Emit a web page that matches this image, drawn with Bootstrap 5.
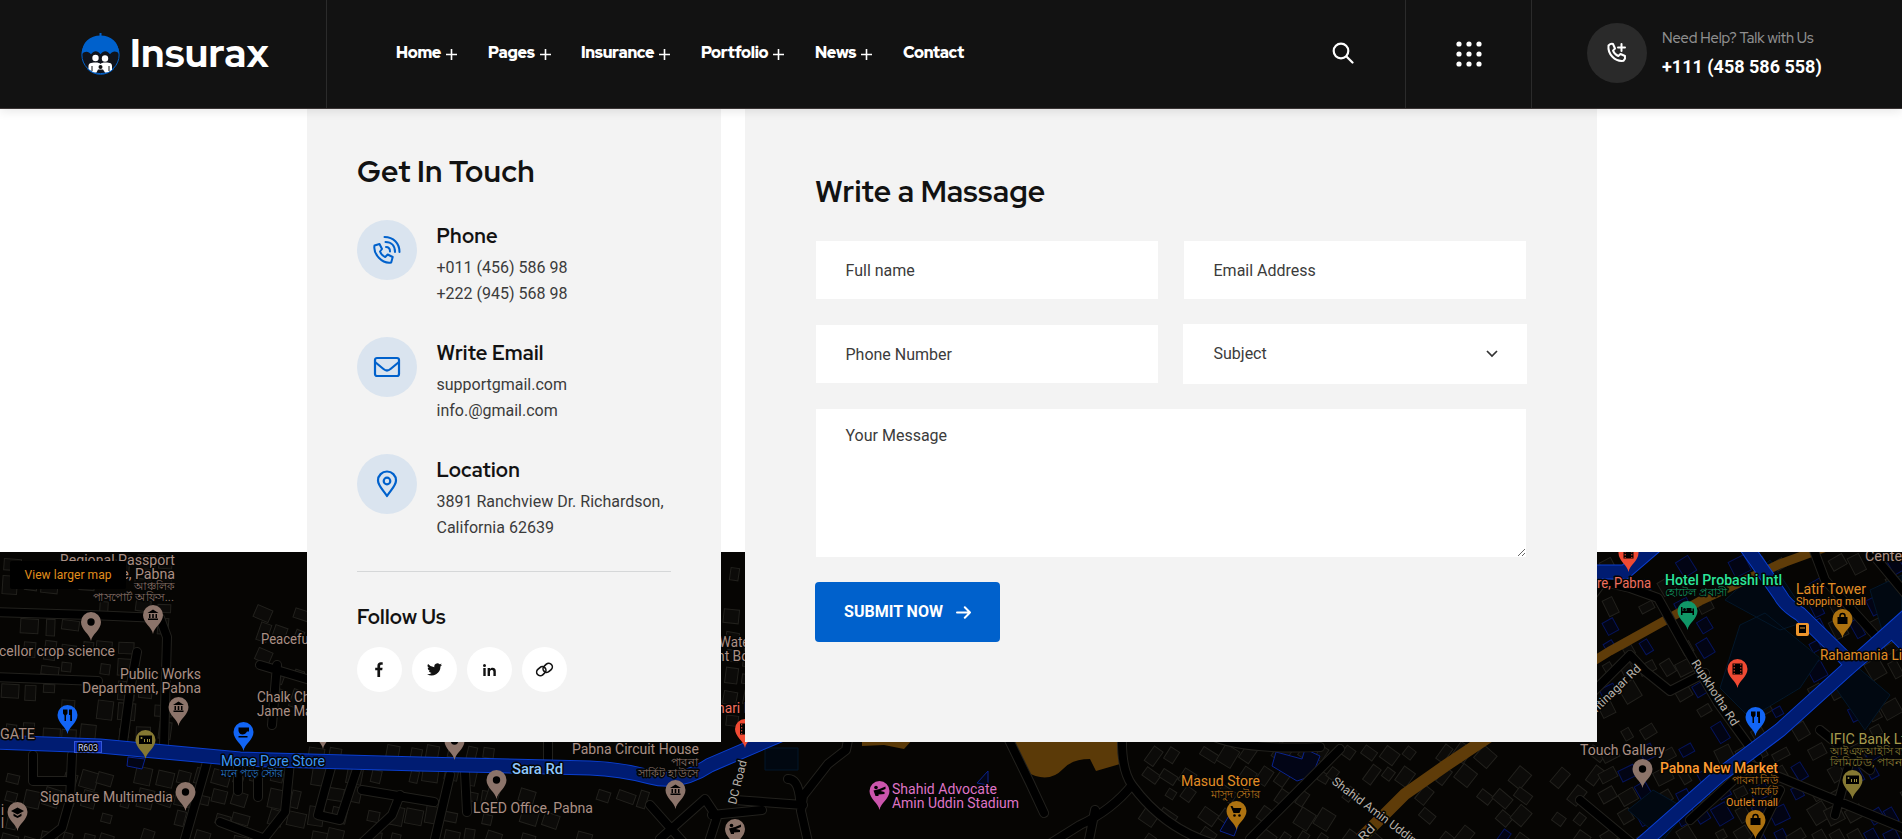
<!DOCTYPE html>
<html lang="en">
<head>
<meta charset="utf-8">
<meta name="viewport" content="width=device-width, initial-scale=1">
<title>Insurax - Contact</title>
<link href="https://cdn.jsdelivr.net/npm/bootstrap@5.3.0/dist/css/bootstrap.min.css" rel="stylesheet">
<style>
  :root { --ink:#121212; --blue:#0061cc; --panel:#f3f3f3; --head:"Red Hat Display","Inter",sans-serif; }
  body { font-family:"Roboto",sans-serif; color:#3b3b3b; height:839px; overflow:hidden; background:#fff; }
  .site-head { height:109px; background:var(--ink); border-bottom:1px solid #3a3434; box-shadow:0 2px 10px rgba(0,0,0,.1); z-index:5; }
  .brand { width:327px; padding-left:81px; border-right:1px solid #2b2b2b; color:#fff; }
  .brand-name { font:800 39.5px/1 var(--head); letter-spacing:.35px; margin-left:10px; margin-top:-1px; }
  .menu { padding-left:69px; font:900 16px/1 var(--head); letter-spacing:-.3px; color:#fff; }
  .menu a { text-decoration:none; display:flex; align-items:center; gap:5px; margin-top:-2px; }
  .cell { border-left:1px solid #2b2b2b; }
  .call-dot { width:60px; height:60px; background:#2a2a2a; }
  .help { font:500 14.5px/1 var(--head); color:#8f8f8f; letter-spacing:-.12px; white-space:nowrap; }
  .tel { font:700 18px/1 "Roboto",sans-serif; color:#fff; margin-top:13px; margin-bottom:-1px; white-space:nowrap; }
  .contact-area { height:730px; }
  .map { top:443px; left:0; width:1902px; height:287px; }
  .panels { margin-left:307px; width:1290px; gap:24px; height:633px; }
  .touch { width:414px; background:var(--panel); padding:44px 50px 0; }
  .write { width:852px; background:var(--panel); padding:64px 70px 0; }
  h2 { font:700 30px/36px var(--head); letter-spacing:.25px; color:var(--ink); margin:0 0 1px; white-space:nowrap; }
  h3 { font:700 20px/24px var(--head); letter-spacing:.2px; color:var(--ink); margin:0; }
  .entry { height:117px; gap:19.500px; }
  .entry p { margin:7px 0 0; font-size:16px; line-height:26px; font-weight:400; white-space:nowrap; color:#3b3b3b; }
  .entry .words { padding-top:4px; }
  .disc { width:60px; height:60px; background:#dae4ef; flex:none; }
  .social a { width:45px; height:45px; background:#fff; color:var(--ink); }
  .write .form-control { height:60px; border:1px solid var(--panel); border-radius:0; background:#fff; padding:0 29.500px; font-size:16px; font-weight:400; color:#3b3b3b; }
  .write .form-control::placeholder { color:#3b3b3b; opacity:1; }
  .write textarea.form-control { height:150px; padding-top:15px; }
  .subject { height:60px; background:#fff; padding:0 29px 0 30.500px; font-weight:400; color:#3b3b3b; }
  .fields { display:grid; grid-template-columns:344px 344px; gap:24px; }
  .wide { grid-column:span 2; }
  .send { width:185px; height:60px; background:var(--blue); color:#fff; border:0; border-radius:4px; font-weight:700; font-size:16px; letter-spacing:0; white-space:nowrap; }
  .larger { left:10px; margin-top:9px; width:116px; height:28px; background:#000; color:#e28f1c; font-size:12px; letter-spacing:.05px; border-radius:2px; top:443px; }
  .map text { font-family:"Roboto","Noto Sans",sans-serif; font-size:14px; paint-order:stroke; stroke:#050504; stroke-width:3px; stroke-linejoin:round; }
</style>
</head>
<body>
<header class="site-head d-flex position-relative">
  <div class="brand d-flex align-items-center">
    <svg width="39" height="42" viewBox="0 0 39 42">
      <circle cx="19.5" cy="22" r="18.6" fill="#10131b" stroke="#0061cc"/>
      <path d="M19.5 0v4" stroke="#0061cc" stroke-width="2"/>
      <path d="M.8 21C1 9 9 2.500 19.500 2.500S38 9 38.200 21c-3-3.500-6.500-3-9.200.2-3-4-6.500-4-9.500 0-3-4-6.500-4-9.500 0-2.500-3.200-6-3.500-9.200-.2z" fill="#0061cc"/>
      <g fill="#fff"><circle cx="14.500" cy="25" r="3.200"/><circle cx="24" cy="25.500" r="3.200"/><path d="M7.500 36v-3c0-2.500 2-3.500 7-3.500 3 0 4 .5 5 1.500 1-1 2-1.500 5-1.500 5 0 6.500 1 6.500 3.500v4l-4 2.500h-3l-2-3h-5l-1.500 3h-3z"/></g>
      <circle cx="19.500" cy="34" r="2" fill="#121212"/><path d="M11 33v5M28 33v5" stroke="#121212"/>
      <path d="M6 35.500a18.600 18.600 0 0 0 27 0" fill="none" stroke="#0061cc"/>
    </svg>
    <span class="brand-name">Insurax</span>
  </div>
  <nav class="menu d-flex align-items-center" id="menu"></nav>
  <div class="ms-auto d-flex">
    <div class="d-flex align-items-center pe-0" style="width:73px;padding-bottom:2px">
      <svg width="22" height="22" viewBox="0 0 22 22" fill="none" stroke="#fff" stroke-width="2.200" stroke-linecap="round"><circle cx="9" cy="9" r="7.300"/><path d="M14.500 14.500l6 6"/></svg>
    </div>
    <div class="cell d-flex align-items-center justify-content-center" style="width:126px">
      <svg width="26" height="26" fill="#fff"><g id="d"><circle cx="3" cy="3" r="2.600"/><circle cx="13" cy="3" r="2.600"/><circle cx="23" cy="3" r="2.600"/></g><use href="#d" y="10"/><use href="#d" y="20"/></svg>
    </div>
    <div class="cell d-flex align-items-center" style="width:371px;padding-left:55px;padding-bottom:2px">
      <span class="call-dot rounded-circle d-flex align-items-center justify-content-center">
        <svg width="22" height="22" viewBox="0 0 22 22" fill="none" stroke="#fff" stroke-width="2" stroke-linejoin="round" stroke-linecap="round"><path d="M2.500 3.500C3.500 2.500 5.500 1.500 7 2l2 4.500-2 2.200c1 2.500 3 4.400 5.300 5.300l2.200-2 4.500 2c.5 1.700-.3 3.500-1.500 4.800C9 20 1.500 12 2.500 3.500z"/><path d="M15.500 2v7M12 5.500h7"/></svg>
      </span>
      <span style="margin-left:15px"><span class="help d-block">Need Help? Talk with Us</span><span class="tel d-block">+111 (458 586 558)</span></span>
    </div>
  </div>
</header>

<main class="contact-area position-relative overflow-hidden">
  <svg class="map position-absolute" viewBox="0 552 1902 287" id="map">
    <defs>
      <g id="roads" fill="none" stroke-linejoin="round" stroke-linecap="round">
        <path d="M-5 612L90 615 160 618 167 637 164 745M-5 677L98 681M137 652L130 690 123 742M72 755L70 800 62 828 40 845M33 755L33 781 65 781M207 762L185 839M238 765v26M258 765v32M290 762l-5 50-22 28M220 822l45 17M277 665l-5 60M260 665l50 15"/>
        <path d="M362 790l72 12M333 760l-15 55 22 5 20-60M400 795l-8 20-30 28M450 775l-15 64M465 772l2 40M548 740v20M650 805l40 45M660 839l45-40 12 18-8 25M712 815l50-5"/>
        <path d="M848 740l-2 10-18 14-25 32-2 15 9 40M735 800l68 5M788 779q10 0 12 20M1008 738l22 45 14 30M1122 735q-1 35 10 50-20 25-52 40l-40 25M1132 785q40 55 110 65M1095 810l-8 40M1210 735q30 15 110 12M1250 839l60-60 30-30"/>
        <path d="M1570 520l25 60 35 8 28 10 25 45 35 60 40 55M1560 640l40-55M1570 715l60-60 15 16 25 20 35-18M1810 540l15 40 50 55M1820 730l50 40M1865 545l50 60M1580 800l60 50M1690 820l60-55 170 70M1780 790l-25 50M1850 760l-15 55"/>
      </g>
      <path id="pin" d="M0 19C-1 12-10 8-10 0A10 10 0 1 1 10 0C10 8 1 12 0 19Z"/>
    </defs>
    <rect y="552" width="1902" height="287" fill="#060503"/>
    <g id="blocks"></g>
    <path d="M862 738h52l-10 11-20-4-22 1zM1014 738h106v26l-24 7-6-12q-18 0-27 10-15 16-38 2z" fill="#5b3a08"/>
    <path d="M1555 685l55-34 90-50 80-37 60-22" fill="none" stroke="#5f3c09" stroke-width="9"/>
    <path d="M1360 839l45-45 40-28 60-40" fill="none" stroke="#5f3c09" stroke-width="12"/>
    <use href="#roads" stroke="#22211d" stroke-width="10"/><use href="#roads" stroke="#000" stroke-width="8"/>
    <g fill="none"><g stroke="#0a3fd0" stroke-width="15"><path d="M-5 742L100 746 240 759 420 764 590 768Q620 769 650 777T710 765L780 735"/><path d="M1560 572h65l35-30M1745 545l35 50q5 10 20 19l52 51 65-58M1635 850l85-75 60-45 72-65 70-60M1896 635l30 30"/></g>
    <g stroke="#001c72" stroke-width="13"><path d="M-5 742L100 746 240 759 420 764 590 768Q620 769 650 777T710 765L780 735"/><path d="M1560 572h65l35-30M1745 545l35 50q5 10 20 19l52 51 65-58M1635 850l85-75 60-45 72-65 70-60M1896 635l30 30"/></g></g>
    <g id="marks"></g>
  </svg>
  <a class="larger position-absolute d-flex align-items-center justify-content-center text-decoration-none">View larger map</a>

  <div class="panels d-flex position-relative">
    <section class="touch">
      <h2>Get In Touch</h2>
      <div style="height:30px"></div>
      <div class="entry d-flex">
        <span class="disc rounded-circle d-flex align-items-center justify-content-center"><svg width="30" height="30" viewBox="0 0 30 30" fill="none" stroke="#0061cc" stroke-width="2" stroke-linejoin="round" stroke-linecap="round"><path d="M2.500 10.500l5-1.500 2.500 5-2 2.500c1 3 3 4.500 5.200 5.500l2.500-2.500 5 2.500-1.500 5.500C10 29 1 19 2.500 10.500z"/><path d="M14 12c2.500 0 4 2 4 4.500M13.500 7c6 0 9.500 4 9.500 10M12.500 2c9 0 15 6.500 15 15"/></svg></span>
        <div class="words"><h3>Phone</h3><p>+011 (456) 586 98<br>+222 (945) 568 98</p></div>
      </div>
      <div class="entry d-flex">
        <span class="disc rounded-circle d-flex align-items-center justify-content-center"><svg width="28" height="22" viewBox="0 0 28 22" fill="none" stroke="#0061cc" stroke-width="2.200"><rect x="2" y="2" width="24" height="18" rx="2"/><path d="M2 6l8.500 7q3.500 3 7 0L26 6"/></svg></span>
        <div class="words"><h3>Write Email</h3><p>supportgmail.com<br>info.@gmail.com</p></div>
      </div>
      <div class="entry d-flex">
        <span class="disc rounded-circle d-flex align-items-center justify-content-center"><svg width="22" height="28" viewBox="0 0 22 28" fill="none" stroke="#0061cc" stroke-width="2.200" stroke-linejoin="round"><path d="M11 26C7 20 2 15.500 2 10.500a9 9 0 0 1 18 0C20 15.500 15 20 11 26z"/><circle cx="11" cy="11" r="3.300"/></svg></span>
        <div class="words"><h3>Location</h3><p>3891 Ranchview Dr. Richardson,<br>California 62639</p></div>
      </div>
      <div style="border-top:1px solid #d5d7d8;margin-bottom:33px"></div>
      <h3>Follow Us</h3>
      <div class="social d-flex" style="gap:10px;margin-top:18px">
        <a class="rounded-circle d-flex align-items-center justify-content-center"><svg width="9" height="15" viewBox="0 0 9 15" fill="currentColor"><path d="M2.400 15V8.300H.2V5.700h2.200V3.900C2.400 1.500 3.700.3 5.800.3c1 0 1.900.1 1.900.1v2.300H6.500c-1.100 0-1.400.6-1.400 1.300v1.700h2.500l-.4 2.600H5.100V15z"/></svg></a>
        <a class="rounded-circle d-flex align-items-center justify-content-center"><svg width="15" height="13" viewBox="0 0 24 20" fill="currentColor"><path d="M24 2.400a10 10 0 0 1-2.800.8A5 5 0 0 0 23.300.5a10 10 0 0 1-3.100 1.200 4.900 4.900 0 0 0-8.400 4.500A14 14 0 0 1 1.700 1a4.900 4.900 0 0 0 1.500 6.600 5 5 0 0 1-2.200-.6 4.900 4.900 0 0 0 3.900 4.900 5 5 0 0 1-2.200.1 4.900 4.900 0 0 0 4.600 3.400A9.900 9.900 0 0 1 0 17.400 14 14 0 0 0 21.500 5 10 10 0 0 0 24 2.400z"/></svg></a>
        <a class="rounded-circle d-flex align-items-center justify-content-center"><svg width="13" height="12" viewBox="0 0 13 12" fill="currentColor"><circle cx="1.500" cy="1.500" r="1.500"/><path d="M.3 4h2.400v8H.3zM4.600 4H7v1.100C8.400 3 12.800 3.200 12.800 7.100V12h-2.400V7.700c0-2.500-3.400-2.300-3.400 0V12H4.600z"/></svg></a>
        <a class="rounded-circle d-flex align-items-center justify-content-center"><svg width="19" height="15" viewBox="0 0 19 15" fill="none" stroke="currentColor" stroke-width="1.600"><rect x="-5" y="-3.600" width="10" height="7.200" rx="3.600" transform="translate(12.700 5.800) rotate(-42)"/><rect x="-5" y="-3.600" width="10" height="7.200" rx="3.600" transform="translate(6.300 9.200) rotate(-42)"/></svg></a>
      </div>
    </section>
    <section class="write">
      <h2>Write a Massage</h2>
      <form class="fields" style="margin-top:31px">
        <input class="form-control" placeholder="Full name">
        <input class="form-control" placeholder="Email Address">
        <input class="form-control" placeholder="Phone Number">
        <div class="subject d-flex align-items-center justify-content-between">Subject<svg width="12" height="8" viewBox="0 0 12 8" fill="none" stroke="#333" stroke-width="1.700"><path d="M1 1l5 5 5-5"/></svg></div>
        <textarea class="form-control wide" placeholder="Your Message"></textarea>
        <button type="button" class="send d-flex align-items-center justify-content-center">SUBMIT NOW<svg style="margin-left:13px" width="15" height="13" viewBox="0 0 15 13" fill="none" stroke="#fff" stroke-width="2" stroke-linecap="round" stroke-linejoin="round"><path d="M1 6.500h13M8.800 1.200L14 6.500l-5.200 5.300"/></svg></button>
      </form>
    </section>
  </div>
</main>
<script src="https://cdn.jsdelivr.net/npm/bootstrap@5.3.0/dist/js/bootstrap.bundle.min.js"></script>
<script>
// Main menu: label, width of the slot up to the next label, has a submenu
[['Home',92,1],['Pages',93,1],['Insurance',120,1],['Portfolio',114,1],['News',88,1],['Contact',70,0]].forEach(([t,w,sub])=>{
  document.getElementById('menu').insertAdjacentHTML('beforeend',
  `<a style="width:${w}px">${t}${sub?'<svg style="margin-top:2px" width="11" height="11" stroke="#fff" stroke-width="1.600"><path d="M5.500 0v11M0 5.500h11"/></svg>':''}</a>`);
});
// Building outlines, laid on loosely rotated street grids
let seed=7; const rnd=()=>(seed=(seed*16807)%2147483647)/2147483647;
let b='';
function district(x0,y0,x1,y1,rot,density,blue){
  for(let y=y0;y<y1;y+=21) for(let x=x0;x<x1;x+=19){
    if(rnd()>density) continue;
    const w=8+rnd()*10,h=8+rnd()*11,isBlue=rnd()<blue;
    b+=`<rect x="${(-w/2).toFixed(1)}" y="${(-h/2).toFixed(1)}" width="${w.toFixed(1)}" height="${h.toFixed(1)}" transform="translate(${(x+9+rnd()*5).toFixed(1)} ${(y+10+rnd()*5).toFixed(1)}) rotate(${(rot+rnd()*6).toFixed(1)})" fill="${isBlue?'#020414':'#0c0b09'}" stroke="${isBlue?'#06145a':'#22211d'}"/>`;
  }
}
district(0,552,170,735,2,.72,0); district(250,600,307,700,18,.6,0); district(0,765,300,839,12,.7,0);
district(307,742,480,839,8,.7,0); district(480,785,640,839,14,.45,0); district(721,560,745,720,5,.8,0);
district(1140,742,1320,839,30,.75,.05); district(1320,742,1597,839,35,.6,.05);
district(1597,552,1902,740,-32,.5,.4); district(1597,740,1902,839,-32,.75,.5);
b+='<g fill="#010811" stroke="#03172a"><path d="M1740 625l25-12 55 45-20 30-50 30-30-30zM1830 680l25-15 35 30-25 35zM1870 590l32-15v40l-20 15zM765 748h33v22h-33zM1725 600l45-40 40 60-30 10zM1628 810l25-20 35 20-25 30z"/></g><g fill="#020516" stroke="#0a2390"><path d="M128 757l17 2-3 10-15-3zM1276 752l26 7 3-10 15 7-8 20-15 5-25-15zM1230 814l-10 17 14 5 4-10zM977 783l11-12v14z"/></g>';
document.getElementById('blocks').innerHTML=b;

const glyph={
 dot:'<circle r="3.700" fill="#000"/>',
 hall:'<path d="M-5.500-2L0-5.500 5.500-2zM-5 3.500H5V5H-5zM-4-1h1.500v4H-4zM-.8-1H.8v4H-.8zM2.500-1H4v4H2.500z"/>',
 food:'<path d="M-4.500-5.500v4l1.500 2V6h1.500V.500L0-1.500v-4zM1.500-5.500h3V6h-1.800V0H1.500z"/>',
 cup:'<path d="M-5-4.500H5.500v4H3.500Q2 2.500-1 2.500T-5-1zM-5 4H4v1.500H-5z"/>',
 cash:'<path d="M-6.500-4.500h13v8.500h-13z"/><circle cx="-4" cy="-2" r="1" fill="#9b8e3c"/><path d="M-1-1v3M2-1v3M4-1v3" stroke="#9b8e3c"/>',
 cap:'<path d="M-6.500-1L0-4.500 6.500-1 0 2.500zM-4 1.500L0 4 4 1.500V4L0 6-4 4z"/>',
 bag:'<path d="M-5-2H5V5H-5z"/><path d="M-2.500-1v-2a2.500 2.500 0 0 1 5 0v2" fill="none" stroke="#000" stroke-width="1.500"/>',
 cart:'<path d="M-6-5h2l1 2H5L3 2H-3z"/><circle cx="-2" cy="4.500" r="1.300"/><circle cx="3" cy="4.500" r="1.300"/>',
 film:'<path d="M-5-5.500H5v11H-5z"/><path d="M-3.300-5v10M3.300-5v10" stroke="#f04a33" stroke-dasharray="1.500 1.500"/>',
 bed:'<path d="M-6.500-4h1.500v4h10v-2.500h1.500V4H5V2H-5v2h-1.500z"/><circle cx="-3" cy="-1.500" r="1.500"/><path d="M-1-3h5v3h-5z"/>',
 run:'<circle cx="-3.500" cy="-3.500" r="1.800"/><path d="M-6-.5L0-2 6-4.500V-2L1 0l4 1v2l-6 .5V5h-3z"/>'};
const brown='#8c746a',tan='#ab9085',or='#e28d24';
let m='';
[[91,622,brown,'dot'],[153,615,brown,'hall'],[178.500,707,brown,'hall'],[67.500,715,'#1265f5','food'],[145.500,740,'#857832','cash'],[243.500,732,'#1265f5','cup'],[185.500,792,brown,'dot'],[17.500,812,brown,'cap'],[496.500,780,brown,'dot'],[454.500,741,brown,'dot'],[323,730,brown,'dot'],[675.500,790,brown,'hall'],[735,829,brown,'run'],[745,729,'#f04a33','film'],[879.500,791,'#cb55ac','run'],[1236.500,811,'#ad7210','cart'],[1628.500,553,'#f04a33','film'],[1687.500,611,'#109767','bed'],[1737.500,669,'#f04a33','film'],[1755.500,717,'#1265f5','food'],[1842.500,619,'#ad7210','bag'],[1642.500,769,brown,'dot'],[1852.500,780,'#857832','cash'],[1755.500,820,'#ad7210','bag']]
.forEach(([x,y,c,g])=>m+=`<g transform="translate(${x} ${y})"><use href="#pin" fill="${c}"/>${glyph[g]}</g>`);
m+='<rect x="1796" y="623" width="13" height="13" rx="2" fill="#ee952c"/><path d="M1799 625h7v8h-7z"/><path d="M1800 628h5" stroke="#ee952c"/><rect x="74.500" y="741.500" width="27" height="11" fill="#0a29b5" stroke="#3557d6"/>';
// Labels: text, x, baseline, drawn width, colour, size, transform
[['Regional Passport',60,565,115,tan],['Office, Pabna',92,579,83,tan],['আঞ্চলিক',134,590,41,'#8c746a',11],['পাসপোর্ট অফিস...',93,601,81,'#8c746a',11],
['cellor crop science',-1,656,116,tan],['Public Works',120,679,81,tan],['Department, Pabna',82,693,119,tan],['Peaceful',261,644,51,tan],['Chalk Chowk',257,702,78,tan],['Jame Masjid',257,716,76,tan],
['GATE',0,739,35,tan],['R603',78,750.500,20,'#c8d4ff',9.500],['Mone Pore Store',221,766,104,'#3b97f5'],['মনে পড়ে স্টোর',221,777,62,'#2676c9',11],['Signature Multimedia',40,802,133,tan],['i',1,815,3,tan],['l',1,828,3,tan],
['Pabna Circuit House',572,754,127,tan],['পাবনা',671,766,27,'#8c746a',11],['সার্কিট হাউসে',638,777,60,'#8c746a',11],['Sara Rd',512,774,51,'#8fc9ff'],['LGED Office, Pabna',473,813,120,tan],
['Water',719,647,35,tan],['nt Board',717,661,52,tan],['hari Masjid',717,713,68,'#f0705e'],
['Shahid Advocate',892,794,105,'#df74c5'],['Amin Uddin Stadium',892,808,127,'#df74c5'],['Masud Store',1181,786,79,or],['মাসুদ স্টোর',1211,798,49,'#ba741b',11],
['re, Pabna',1597,588,54,'#f0705e'],['Hotel Probashi Intl',1665,585,117,'#2be69b'],['হোটেল প্রবাসী',1665,596,62,'#10945f',11],['Latif Tower',1796,594,70,or],['Shopping mall',1796,605,70,or,11.500],['Rahamania Li',1820,660,82,or],['Center',1865,561,42,tan],
['Touch Gallery',1580,755,85,tan],['Pabna New Market',1660,773,118,'#ff9c31'],['পাবনা নিউ',1732,784,47,'#ba741b',11],['মার্কেট',1751,795,27,'#ba741b',11],['Outlet mall',1726,806,52,or,11.500],['IFIC Bank Ltd',1830,744,84,'#a59a4c'],['আইএফআইসি ব্যাংক',1830,755,90,'#857832',11],['লিমিটেড, পাবনা',1830,766,76,'#857832',11],
['DC Road',0,0,45,'#b7b1aa',12,'translate(736 805) rotate(-76)'],['Shahid Amin Uddin Rd',0,0,120,'#b7b1aa',12,'translate(1331 783) rotate(37)'],['Rd',0,0,18,'#b7b1aa',12,'translate(1363 842) rotate(-45)'],['Shantinagar Rd',0,0,83,'#b7b1aa',12,'translate(1582 727) rotate(-44)'],['Rupkhotha Rd',0,0,76,'#b7b1aa',12,'translate(1691 663) rotate(57)']]
.forEach(([t,x,y,w,c,s,tr])=>m+=`<text x="${x}" y="${y}" fill="${c}" textLength="${w}" lengthAdjust="spacingAndGlyphs" style="font-size:${s||14}px${c=='#ff9c31'||c=='#2be69b'||c=='#8fc9ff'?';font-weight:500':''}" ${tr?`transform="${tr}"`:''}>${t}</text>`);
document.getElementById('marks').innerHTML=m;
</script>
</body>
</html>
